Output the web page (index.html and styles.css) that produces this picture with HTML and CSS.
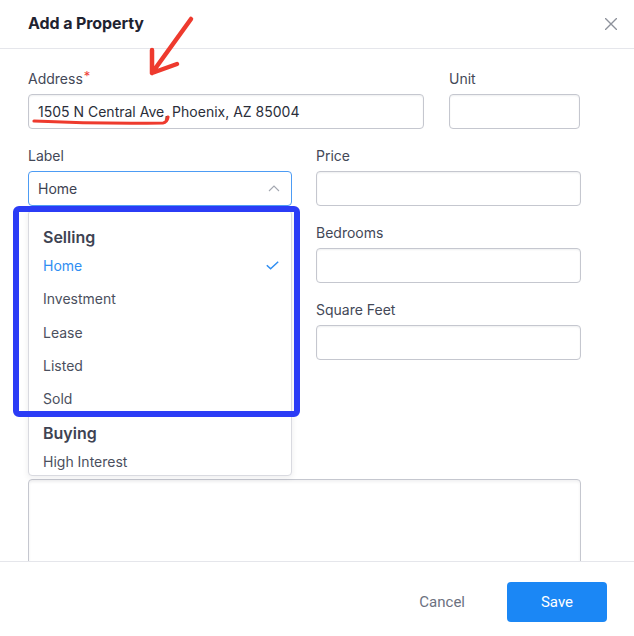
FILE: index.html
```html
<!DOCTYPE html>
<html lang="en">
<head>
<meta charset="utf-8">
<title>Add a Property</title>
<link rel="stylesheet" href="styles.css">
</head>
<body>
<div class="modal">
  <header class="header">
    <h1 class="title">Add a Property</h1>
    <button class="close" aria-label="Close">
      <svg width="12" height="12" viewBox="0 0 12 12"><path d="M0.5 0.5 L11.5 11.5 M11.5 0.5 L0.5 11.5" stroke="#8d919b" stroke-width="1.4" fill="none" stroke-linecap="round"/></svg>
    </button>
  </header>

  <div class="body">
    <div class="form">
      <div class="row row-top">
        <div class="field">
          <label class="label">Address<span class="req">*</span></label>
          <input class="input" type="text" value="1505 N Central Ave, Phoenix, AZ 85004" readonly>
        </div>
        <div class="field">
          <label class="label">Unit</label>
          <input class="input" type="text" value="" readonly>
        </div>
      </div>

      <div class="row row-main">
        <div class="col">
          <div class="field select-field">
            <label class="label">Label</label>
            <div class="select">
              <span>Home</span>
              <svg class="chevron" width="12" height="7" viewBox="0 0 12 7"><path d="M1 6 L6 1 L11 6" stroke="#a3a7b0" stroke-width="1.1" fill="none"/></svg>
            </div>
            <div class="dropdown">
              <div class="group">
                <div class="group-title">Selling</div>
                <div class="option selected">
                  <span>Home</span>
                  <svg width="13" height="9" viewBox="0 0 13 9"><path d="M0.8 4.2 L4.6 7.8 L12.2 0.8" stroke="#2f8ef2" stroke-width="1.5" fill="none"/></svg>
                </div>
                <div class="option">Investment</div>
                <div class="option">Lease</div>
                <div class="option">Listed</div>
                <div class="option">Sold</div>
              </div>
              <div class="group">
                <div class="group-title">Buying</div>
                <div class="option">High Interest</div>
              </div>
            </div>
          </div>
        </div>
        <div class="col col-right">
          <div class="field">
            <label class="label">Price</label>
            <input class="input" type="text" value="" readonly>
          </div>
          <div class="field">
            <label class="label">Bedrooms</label>
            <input class="input" type="text" value="" readonly>
          </div>
          <div class="field">
            <label class="label">Square Feet</label>
            <input class="input" type="text" value="" readonly>
          </div>
        </div>
      </div>

      <textarea class="textarea" readonly></textarea>
    </div>
  </div>

  <footer class="footer">
    <button class="btn-cancel">Cancel</button>
    <button class="btn-save">Save</button>
  </footer>

  <svg class="annotations" width="634" height="636" viewBox="0 0 634 636">
    <rect x="16" y="209" width="281" height="205" rx="3" fill="none" stroke="#2b3cf6" stroke-width="6"/>
    <path d="M191 19 L152 73 M152 50 L152 73 L177 64" stroke="#ee3a2e" stroke-width="4.5" fill="none" stroke-linecap="round" stroke-linejoin="round"/>
    <path d="M34 121 Q100 124 163 123 Q167 122.5 168 117" stroke="#ee3a2e" stroke-width="3.2" fill="none" stroke-linecap="round" stroke-linejoin="round"/>
  </svg>
</div>
</body>
</html>
```

FILE: styles.css
```css
* {
  box-sizing: border-box;
}

html, body {
  margin: 0;
  padding: 0;
  background: #ffffff;
}

body {
  font-family: Inter, "Noto Sans", "Liberation Sans", sans-serif;
  color: #3d4251;
}

.modal {
  position: relative;
  width: 634px;
  height: 636px;
  display: flex;
  flex-direction: column;
  background: #ffffff;
  overflow: hidden;
}

.header {
  height: 49px;
  flex: none;
  display: flex;
  align-items: center;
  justify-content: space-between;
  padding: 0 17px 3px 28px;
  border-bottom: 1px solid #e5e6eb;
}

.title {
  margin: 0;
  font-size: 16px;
  font-weight: 650;
  color: #1f2330;
  letter-spacing: -0.1px;
}

.close {
  border: 0;
  background: none;
  padding: 0;
  width: 12px;
  height: 12px;
  display: flex;
  margin-top: 2px;
}

.body {
  flex: 1;
  overflow: hidden;
  padding: 20px 28px 0;
}

.form {
  width: 553px;
  display: flex;
  flex-direction: column;
}

.row {
  display: grid;
}

.row-top {
  grid-template-columns: 396px 131px;
  column-gap: 25px;
}

.row-main {
  grid-template-columns: 264px 265px;
  column-gap: 24px;
  margin-top: 17px;
}

.col-right {
  display: flex;
  flex-direction: column;
  gap: 17px;
}

.field {
  display: flex;
  flex-direction: column;
  gap: 5px;
}

.label {
  display: block;
  height: 20px;
  font-size: 14px;
  line-height: 20px;
  color: #434857;
}

.req {
  color: #ef4136;
  font-size: 13px;
  line-height: 0;
  vertical-align: 3px;
  margin-left: 1px;
}

.input {
  height: 35px;
  width: 100%;
  border: 1px solid #c5c7cf;
  border-radius: 4px;
  padding: 0 9px;
  font: inherit;
  font-size: 14px;
  color: #2a2e3a;
  background: #fff;
  box-shadow: inset 0 1px 2px rgba(20, 25, 40, 0.07);
  outline: none;
}

.select-field {
  position: relative;
}

.select {
  height: 35px;
  border: 1px solid #4d9cf4;
  border-radius: 4px;
  padding: 0 11px 0 9px;
  display: flex;
  align-items: center;
  justify-content: space-between;
  font-size: 14px;
  color: #3d4251;
}

.chevron {
  margin-top: -1px;
}

.dropdown {
  position: absolute;
  top: 64px;
  left: 0;
  width: 264px;
  height: 266px;
  overflow: hidden;
  background: #ffffff;
  border: 1px solid #d9dae0;
  border-radius: 4px;
  box-shadow: 0 2px 6px rgba(20, 25, 40, 0.08);
  padding: 8px 0 0;
  z-index: 2;
}

.group {
  padding-top: 6px;
}

.group-title {
  font-size: 16px;
  font-weight: 600;
  line-height: 24px;
  padding: 0 12px 0 14px;
  color: #3e4352;
}

.option {
  height: 33.25px;
  display: flex;
  align-items: center;
  justify-content: space-between;
  padding: 0 12px 0 14px;
  font-size: 14px;
  color: #4b505e;
}

.option.selected {
  color: #2f8ef2;
}

.textarea {
  display: block;
  margin-top: 119px;
  width: 553px;
  height: 110px;
  border: 1px solid #c5c7cf;
  border-radius: 4px;
  resize: none;
  font: inherit;
  background: #fff;
  box-shadow: inset 0 2px 3px rgba(20, 25, 40, 0.06);
  outline: none;
}

.footer {
  height: 75px;
  flex: none;
  border-top: 1px solid #e5e6eb;
  display: flex;
  align-items: flex-start;
  justify-content: flex-end;
  padding: 20px 27px 0 0;
  gap: 42px;
}

.btn-cancel {
  border: 0;
  background: none;
  padding: 0;
  height: 40px;
  font-family: Roboto, "Liberation Sans", sans-serif;
  font-size: 15px;
  color: #6c717f;
}

.btn-save {
  border: 0;
  width: 100px;
  height: 40px;
  border-radius: 4px;
  background: #1b87f5;
  color: #ffffff;
  font-family: Roboto, "Liberation Sans", sans-serif;
  font-size: 15px;
}

.annotations {
  position: absolute;
  left: 0;
  top: 0;
  pointer-events: none;
  z-index: 5;
}
```
